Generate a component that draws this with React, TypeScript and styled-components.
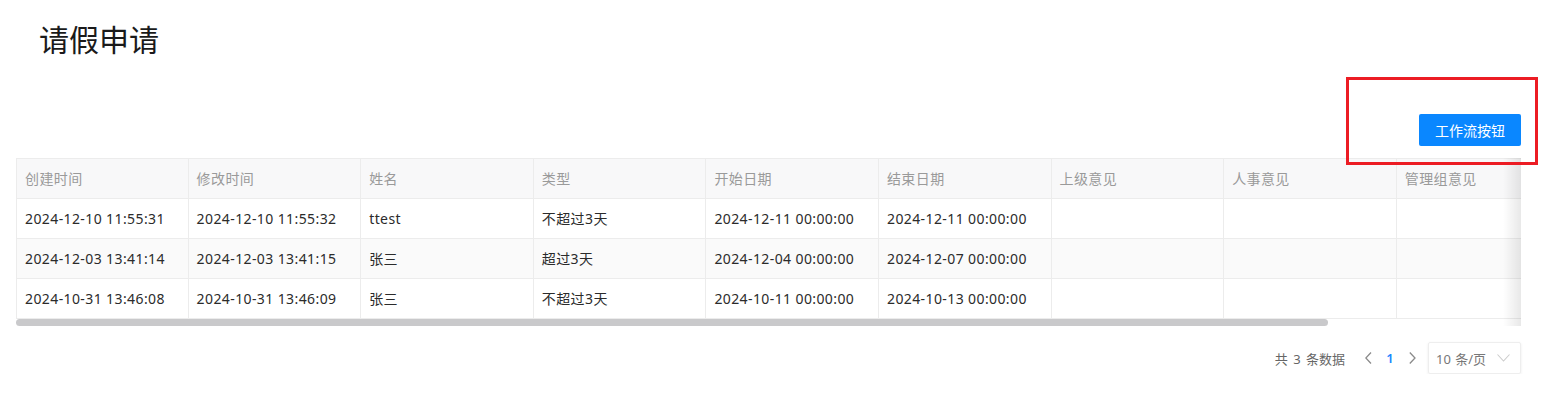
import React from 'react';
import styled, { createGlobalStyle } from 'styled-components';

const GlobalStyle = createGlobalStyle`
  html, body {
    margin: 0;
    padding: 0;
    background: #ffffff;
    font-family: "Noto Sans", "Noto Sans CJK SC", sans-serif;
  }
`;

const Page = styled.div`
  position: relative;
  padding: 16px 25px 0 16px;
`;

const Title = styled.h1`
  margin: 0;
  padding-left: 23px;
  font-size: 30px;
  line-height: 44px;
  font-weight: 400;
  color: #1a1a1a;
  font-family: "Noto Sans CJK SC", sans-serif;
`;

const Toolbar = styled.div`
  display: flex;
  justify-content: flex-end;
  margin-top: 54px;
`;

const PrimaryButton = styled.button`
  height: 32px;
  padding: 0 16px;
  border: none;
  border-radius: 2px;
  background: #0a87ff;
  color: #ffffff;
  font-size: 14px;
  font-family: "Noto Sans CJK SC", sans-serif;
  cursor: pointer;
`;

const Annotation = styled.div`
  position: absolute;
  top: 77px;
  right: 8px;
  width: 192px;
  height: 88px;
  box-sizing: border-box;
  border: 3px solid #ec1c24;
  pointer-events: none;
`;

const TableFrame = styled.div`
  position: relative;
  margin-top: 12px;

  &::after {
    content: '';
    position: absolute;
    top: 0;
    right: 0;
    bottom: 0;
    width: 18px;
    background: linear-gradient(to right, rgba(0, 0, 0, 0), rgba(0, 0, 0, 0.09));
    pointer-events: none;
  }
`;

const ScrollArea = styled.div`
  overflow: hidden;
`;

const ScrollTrack = styled.div`
  height: 7px;
  background: #ffffff;
`;

const ScrollThumb = styled.div`
  height: 100%;
  border-radius: 4px;
  background: #c9c9cb;
`;

const Table = styled.table`
  table-layout: fixed;
  width: 1726px;
  border-collapse: separate;
  border-spacing: 0;
  font-size: 14px;
  letter-spacing: 0.4px;
`;

type CellProps = { $head?: boolean; $striped?: boolean };

const Cell = styled.td<CellProps>`
  padding: 0 8px;
  line-height: 39px;
  white-space: nowrap;
  overflow: hidden;
  text-align: left;
  font-weight: 400;
  color: ${(p) => (p.$head ? '#9a9a9a' : '#2b2b2b')};
  background: ${(p) => (p.$head ? '#f8f8f9' : p.$striped ? '#fafafa' : '#ffffff')};
  border-bottom: 1px solid #ececec;
  border-right: 1px solid #ececec;
  border-top: ${(p) => (p.$head ? '1px solid #ececec' : 'none')};

  &:first-child {
    border-left: 1px solid #ececec;
  }
`;

const Pager = styled.div`
  display: flex;
  justify-content: flex-end;
  align-items: center;
  margin-top: 16px;
  font-size: 13px;
  color: #666666;
  font-family: "Noto Sans", "Noto Sans CJK SC", sans-serif;
`;

const Total = styled.span`
  margin-right: 12px;
  word-spacing: 2px;
`;

const PageArrow = styled.span`
  display: flex;
  align-items: center;
  justify-content: center;
  width: 22px;
  height: 32px;
  color: #888888;
`;

const PageNumber = styled.span`
  width: 22px;
  text-align: center;
  color: #1a87ff;
  font-weight: 600;
`;

const SizeSelect = styled.div`
  display: flex;
  align-items: center;
  justify-content: space-between;
  box-sizing: border-box;
  width: 93px;
  height: 32px;
  margin-left: 5px;
  padding: 0 10px 0 7px;
  border: 1px solid #eeeeee;
  border-radius: 2px;
  box-shadow: 0 1px 3px rgba(0, 0, 0, 0.08);
  color: #777777;
  word-spacing: 1px;
`;

const columns = ['创建时间', '修改时间', '姓名', '类型', '开始日期', '结束日期', '上级意见', '人事意见', '管理组意见', ''];

const rows = [
  ['2024-12-10 11:55:31', '2024-12-10 11:55:32', 'ttest', '不超过3天', '2024-12-11 00:00:00', '2024-12-11 00:00:00', '', '', '', ''],
  ['2024-12-03 13:41:14', '2024-12-03 13:41:15', '张三', '超过3天', '2024-12-04 00:00:00', '2024-12-07 00:00:00', '', '', '', ''],
  ['2024-10-31 13:46:08', '2024-10-31 13:46:09', '张三', '不超过3天', '2024-10-11 00:00:00', '2024-10-13 00:00:00', '', '', '', ''],
];

const thumbRatio = 1312 / 1505;

const Chevron = ({ dir }: { dir: 'left' | 'right' | 'down' }) => {
  if (dir === 'down') {
    return (
      <svg width="13" height="8" viewBox="0 0 13 8">
        <polyline points="0.5,0.5 6.5,7 12.5,0.5" fill="none" stroke="#cccccc" strokeWidth="1.1" />
      </svg>
    );
  }
  const pts = dir === 'left' ? '6,0.5 0.8,6 6,11.5' : '0.8,0.5 6,6 0.8,11.5';
  return (
    <svg width="7" height="12" viewBox="0 0 7 12">
      <polyline points={pts} fill="none" stroke="#8a8a8a" strokeWidth="1.3" />
    </svg>
  );
};

export default function App() {
  return (
    <Page>
      <GlobalStyle />
      <Title>请假申请</Title>
      <Toolbar>
        <PrimaryButton>工作流按钮</PrimaryButton>
      </Toolbar>
      <TableFrame>
        <ScrollArea>
          <Table>
            <colgroup>
              {columns.map((c, i) => (
                <col key={i} style={{ width: 172.5 }} />
              ))}
            </colgroup>
            <thead>
              <tr>
                {columns.map((c, i) => (
                  <Cell as="th" $head key={i}>
                    {c}
                  </Cell>
                ))}
              </tr>
            </thead>
            <tbody>
              {rows.map((row, i) => (
                <tr key={i}>
                  {row.map((v, j) => (
                    <Cell key={j} $striped={i % 2 === 1}>
                      {v}
                    </Cell>
                  ))}
                </tr>
              ))}
            </tbody>
          </Table>
        </ScrollArea>
        <ScrollTrack>
          <ScrollThumb style={{ width: `${thumbRatio * 100}%` }} />
        </ScrollTrack>
      </TableFrame>
      <Pager>
        <Total>共 3 条数据</Total>
        <PageArrow>
          <Chevron dir="left" />
        </PageArrow>
        <PageNumber>1</PageNumber>
        <PageArrow>
          <Chevron dir="right" />
        </PageArrow>
        <SizeSelect>
          <span>10 条/页</span>
          <Chevron dir="down" />
        </SizeSelect>
      </Pager>
      <Annotation />
    </Page>
  );
}
